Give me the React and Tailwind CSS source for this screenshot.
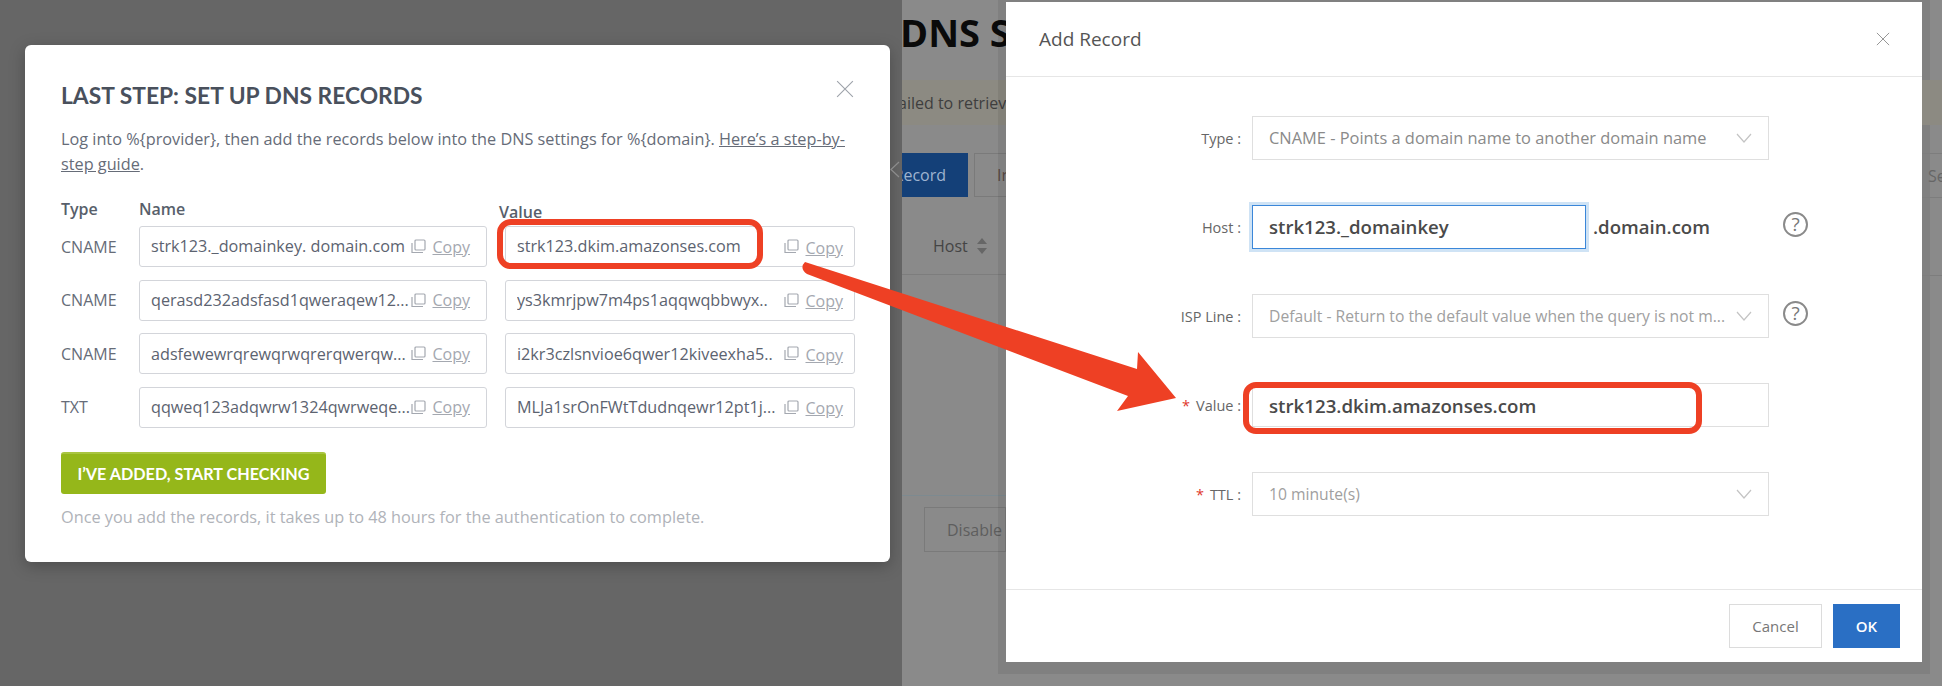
const NAME_ROWS = [
  { type: 'CNAME', name: 'strk123._domainkey. domain.com', value: 'strk123.dkim.amazonses.com' },
  { type: 'CNAME', name: 'qerasd232adsfasd1qweraqew12...', value: 'ys3kmrjpw7m4ps1aqqwqbbwyx..' },
  { type: 'CNAME', name: 'adsfewewrqrewqrwqrerqwerqw...', value: 'i2kr3czlsnvioe6qwer12kiveexha5..' },
  { type: 'TXT', name: 'qqweq123adqwrw1324qwrweqe...', value: 'MLJa1srOnFWtTdudnqewr12pt1j...' },
];

function CopyIcon() {
  return (
    <svg width="15" height="15" viewBox="0 0 15 15" fill="none" stroke="#a4a8b0" strokeWidth="1.2" className="shrink-0">
      <rect x="4" y="1" width="10" height="10" rx="1" />
      <path d="M1 4v9.5h11" />
    </svg>
  );
}

function CopyField({ text, wide }) {
  return (
    <div className={`flex h-[41px] items-center rounded-[3px] border border-[#d3d5da] pl-[11px] ${wide ? 'pr-[11px]' : 'pr-[16px]'}`}>
      <span className="min-w-0 flex-1 overflow-hidden whitespace-nowrap text-[16.2px] text-[#5c6370]">{text}</span>
      <CopyIcon />
      <span className={`ml-[6px] text-[16px] text-[#a4a8b0] underline ${wide ? 'translate-y-[1px]' : ''}`}>Copy</span>
    </div>
  );
}

function Chevron() {
  return (
    <svg width="16" height="10" viewBox="0 0 16 10" fill="none" stroke="#c4c4c4" strokeWidth="1.2" className="shrink-0">
      <path d="M1 1l7 8 7-8" />
    </svg>
  );
}

function Help() {
  return (
    <div className="ml-[14px] flex h-[25px] w-[25px] shrink-0 -translate-y-[3px] items-center justify-center rounded-full border-2 border-[#8a8a8a] text-[19px] leading-none text-[#777]">
      ?
    </div>
  );
}

function CloseX({ size, color }) {
  return (
    <svg width={size} height={size} viewBox="0 0 16 16" fill="none" stroke={color} strokeWidth="1" className="shrink-0">
      <path d="M1 1l14 14M15 1L1 15" />
    </svg>
  );
}

function FormRow({ label, required, children }) {
  return (
    <div className="flex h-[44px] items-center">
      <div className="w-[235px] shrink-0 pt-[2px] text-right text-[14.5px] text-[#666]">
        {required && <span className="mr-[6px] text-[#e0352b]">*</span>}
        {label} :
      </div>
      <div className="ml-[11px] flex h-full items-center">{children}</div>
    </div>
  );
}

function SelectBox({ text, size, muted }) {
  return (
    <div className="flex h-[44px] w-[517px] items-center justify-between border border-[#dfdfdf] pl-[16px] pr-[16px]">
      <span className={`whitespace-nowrap ${size} ${muted ? 'pt-[2px] text-[#a0a0a0]' : 'text-[#8a8a8a]'}`}>{text}</span>
      <Chevron />
    </div>
  );
}

function BehindLeft() {
  return (
    <div className="w-[104px] shrink-0 overflow-hidden">
      <div className="-ml-[2px] mt-[8px] h-[48px] whitespace-nowrap text-[38px] font-bold leading-[48px] text-[#0a0a0a]">DNS Settings</div>
      <div className="mt-[24px] flex h-[45px] items-center bg-[#8c8a82] text-[16px] text-[#3e3e3e]">
        <span className="-ml-[4px] whitespace-nowrap">ailed to retrieve</span>
      </div>
      <div className="mt-[28px] flex h-[44px] gap-[6px]">
        <div className="flex w-[66px] shrink-0 items-center justify-end overflow-hidden bg-[#144078] pr-[22px] text-[16px] text-[#9fb4d0]">
          <span className="whitespace-nowrap">Record</span>
        </div>
        <div className="flex w-[40px] shrink-0 items-center border border-[#7a7a7a] pl-[22px] text-[16px] text-[#5a4a44]">In</div>
      </div>
      <div className="flex h-[78px] items-center border-b border-[#7d7d7d] pl-[31px] pt-[20px] text-[16px] text-[#444]">
        Host
        <svg width="12" height="18" viewBox="0 0 12 18" fill="#666" className="ml-[8px]">
          <path d="M6 1l5 6H1zM6 17l-5-6h10z" />
        </svg>
      </div>
      <div className="mt-[220px] border-t border-[#7d8a90]" />
      <div className="ml-[22px] mt-[11px] flex h-[45px] items-center border border-[#7a7a7a] pl-[22px] text-[16px] text-[#5e5e5e]">
        Disable
      </div>
    </div>
  );
}

function BehindRight() {
  return (
    <div className="w-[20px] shrink-0 overflow-hidden">
      <div className="mt-[80px] h-[45px] bg-[#8c8a82]" />
      <div className="mt-[28px] flex h-[45px] items-center border-y border-[#7d7d7d] pl-[6px] text-[16px] text-[#666]">Se</div>
      <div className="mt-[77px] border-t border-[#7d7d7d]" />
    </div>
  );
}

export default function App() {
  return (
    <div className="relative flex h-[686px] w-[1942px] overflow-hidden font-['Open_Sans',sans-serif]">
      {/* left screenshot */}
      <div className="w-[902px] shrink-0 bg-[#666666] pl-[25px] pt-[45px]">
        <div className="h-[517px] w-[865px] rounded-[6px] bg-white px-[36px] pt-[35px] shadow-[0_4px_16px_rgba(0,0,0,0.25)]">
          <div className="flex justify-between">
            <h1 className="font-['Lato',sans-serif] text-[22.8px] font-bold leading-[30px] text-[#49505c]">LAST STEP: SET UP DNS RECORDS</h1>
            <CloseX size={18} color="#9ea3aa" />
          </div>
          <p className="mt-[17px] text-[16.25px] leading-[25px] text-[#666c78]">
            Log into %{'{'}provider{'}'}, then add the records below into the DNS settings for %{'{'}domain{'}'}.{' '}
            <span className="underline">Here’s a step-by-step guide</span>.
          </p>

          <div className="mt-[21px] grid grid-cols-[60px_348px_350px] gap-x-[18px]">
            <div className="mb-[6px] h-[22px] text-[16px] font-semibold leading-[22px] text-[#585f6b]">Type</div>
            <div className="text-[16px] font-semibold leading-[22px] text-[#585f6b]">Name</div>
            <div className="-ml-[6px] translate-y-[3px] text-[16px] font-semibold leading-[22px] text-[#585f6b]">Value</div>
          </div>
          <div className="grid grid-cols-[60px_348px_350px] gap-x-[18px] gap-y-[12.67px]">
            {NAME_ROWS.map((row) => (
              <div key={row.name} className="contents">
                <div className="flex items-center text-[16px] text-[#666c78]">{row.type}</div>
                <CopyField text={row.name} />
                <CopyField text={row.value} wide />
              </div>
            ))}
          </div>

          <button className="mt-[24px] flex h-[42px] w-[265px] items-center justify-center rounded-[3px] border-t-2 border-[#a9c540] bg-[#95b71a] font-['Lato',sans-serif] text-[16.2px] font-bold text-white">
            I’VE ADDED, START CHECKING
          </button>
          <p className="mt-[11px] text-[16.3px] leading-[25px] text-[#b0b3b9]">
            Once you add the records, it takes up to 48 hours for the authentication to complete.
          </p>
        </div>
      </div>

      {/* right screenshot */}
      <div className="flex flex-1 bg-[#8a8a8a]">
        <BehindLeft />
        <div className="mt-[2px] flex h-[660px] w-[916px] shrink-0 flex-col bg-white shadow-[0_4px_0_8px_rgba(0,0,0,0.07)]">
          <div className="flex h-[75px] shrink-0 items-center justify-between border-b border-[#e6e6e6] pl-[33px] pr-[32px]">
            <span className="text-[19px] font-medium text-[#555]">Add Record</span>
            <CloseX size={14} color="#888" />
          </div>
          <div className="flex flex-1 flex-col gap-[45px] pt-[39px]">
            <FormRow label="Type">
              <SelectBox text="CNAME - Points a domain name to another domain name" size="text-[16.4px]" />
            </FormRow>
            <FormRow label="Host">
              <div className="flex h-[44px] w-[334px] items-center border border-[#3b87d9] pl-[16px] text-[18.6px] font-semibold text-[#4a4a4a] shadow-[0_0_0_3px_#cfe3f5]">
                strk123._domainkey
              </div>
              <span className="ml-[7px] w-[176px] text-[18.6px] font-semibold text-[#4a4a4a]">.domain.com</span>
              <Help />
            </FormRow>
            <FormRow label="ISP Line">
              <SelectBox text="Default - Return to the default value when the query is not m..." size="text-[15.7px]" muted />
              <Help />
            </FormRow>
            <FormRow label="Value" required>
              <div className="flex h-[44px] w-[517px] items-center border border-[#dfdfdf] pl-[16px] pt-[2px] text-[18.7px] font-semibold text-[#4a4a4a]">
                strk123.dkim.amazonses.com
              </div>
            </FormRow>
            <FormRow label="TTL" required>
              <SelectBox text="10 minute(s)" size="text-[15.7px]" muted />
            </FormRow>
          </div>
          <div className="flex h-[73px] shrink-0 justify-end gap-[11px] border-t border-[#e6e6e6] pr-[22px] pt-[14px]">
            <button className="h-[44px] w-[93px] border border-[#dcdcdc] text-[15px] text-[#777]">Cancel</button>
            <button className="h-[44px] w-[67px] bg-[#2a6fc4] text-[15px] font-semibold text-white">OK</button>
          </div>
        </div>
        <BehindRight />
      </div>

      {/* red annotations drawn on top of the screenshots */}
      <svg className="pointer-events-none absolute inset-0" width="1942" height="686" fill="none">
        <path d="M899 162l-8 7.5 8 7.5" stroke="#8c8c8c" strokeWidth="1.2" />
        <rect x="500" y="222" width="260" height="44" rx="11" stroke="#ee4024" strokeWidth="6" />
        <rect x="1246" y="385" width="453" height="46" rx="10" stroke="#ee4024" strokeWidth="6" />
        <path
          d="M805 262L1137 369L1138 352L1176 398L1117 411L1128 396L807 274Q799 268 805 262Z"
          fill="#ee4024"
        />
      </svg>
    </div>
  );
}
